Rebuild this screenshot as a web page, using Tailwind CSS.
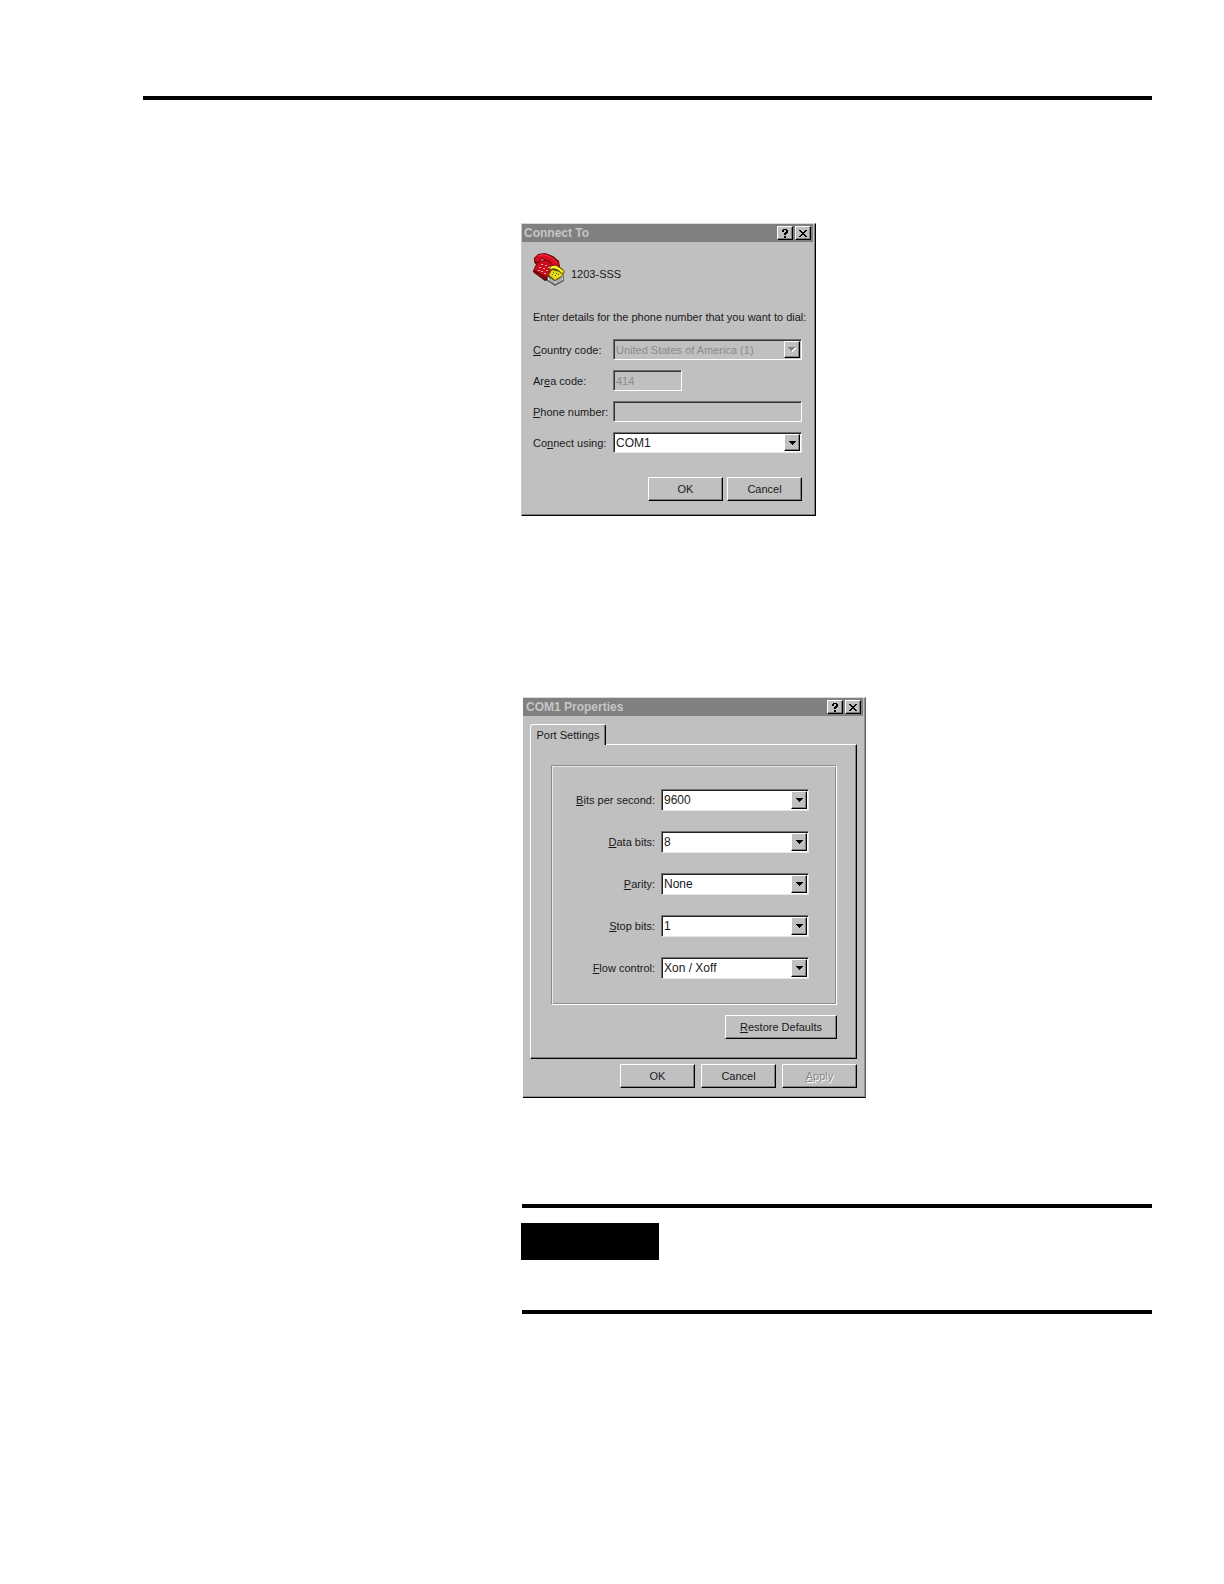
<!DOCTYPE html>
<html lang="en">

<head>
    <meta charset="UTF-8">
    <meta name="viewport" content="width=device-width, initial-scale=1.0">
    <title>1203-SSS Connection Setup</title>
    <script src="https://cdn.jsdelivr.net/npm/@tailwindcss/browser@4"></script>
</head>

<body class="bg-white min-h-screen pt-24 pl-[143px] pr-[72px] pb-24 font-['Liberation_Sans',Arial,sans-serif] text-[11px] leading-[14px] text-[#1a1a1a]">
    <hr class="h-1 border-0 bg-black">

    <!-- Connect To -->
    <section class="ml-[378px] mt-[123px] w-[295px] bg-[#c0c0c0] border-t border-l border-t-[#dadada] border-l-[#c8c8c8] border-r border-b border-r-black border-b-black">
        <div class="pr-px pb-px border-r border-b border-[#808080]">
            <header class="flex items-center justify-between h-[18px] bg-[#808080] pl-[2px] pr-[2px]">
                <h2 class="text-[12px] font-bold text-[#c6c6c6]">Connect To</h2>
                <div class="flex gap-[2px]">
                    <button type="button" aria-label="Help" class="flex items-center justify-center w-4 h-[14px] bg-[#c0c0c0] border border-t-white border-l-white border-r-black border-b-black shadow-[inset_-1px_-1px_0_#808080]">
                        <svg width="8" height="9" viewBox="0 0 8 9" shape-rendering="crispEdges"><path d="M2 0h4v1h1v3h-1v1h-1v1h-2v-2h1v-1h1v-2h-2v2h-2v-2h1zM3 7h2v2h-2z" fill="#000"/></svg>
                    </button>
                    <button type="button" aria-label="Close" class="flex items-center justify-center w-4 h-[14px] bg-[#c0c0c0] border border-t-white border-l-white border-r-black border-b-black shadow-[inset_-1px_-1px_0_#808080]">
                        <svg width="8" height="7" viewBox="0 0 8 7" shape-rendering="crispEdges"><path d="M0 0h2v1h1v1h2v-1h1v-1h2v1h-1v1h-1v1h-1v1h1v1h1v1h1v1h-2v-1h-1v-1h-2v1h-1v1h-2v-1h1v-1h1v-1h1v-1h-1v-1h-1v-1h-1z" fill="#000"/></svg>
                    </button>
                </div>
            </header>

            <form class="pt-[11px] pb-3 px-[11px]" onsubmit="return false">
                <div class="flex items-end gap-[5px]">
                    <svg width="33" height="33" viewBox="0 0 33 33">
                        <path d="M0 18l4-9 14-4 9 8-11 14-4 1-12-9z" fill="#4c0006"/>
                        <path d="M1 17l4-8 12-3 8 7-11 11z" fill="#cc0c1c"/>
                        <path d="M1 18l13 7-2 2-11-7z" fill="#8c0010"/>
                        <path d="M14 24l9-10v5l-9 8z" fill="#740008"/>
                        <path d="M1 5l4-4 7-1 8 3 6 5 1 6-4 2-4-2-1-4-9-4-3 4-4 1-1-3z" fill="#700008"/>
                        <path d="M2 5l4-3 6-1 7 3 6 5 1 3-3 2-3-2-2-3-9-4-4 4-3-1z" fill="#d80c20"/>
                        <path d="M4 3l4-1 5 0 6 3 5 4" fill="none" stroke="#f4343c"/>
                        <path d="M8 11h2v1h-2zM12 12h2v1h-2zM15 14h2v1h-2zM6 14h2v1h-2zM10 15h2v1h-2zM13 17h2v1h-2zM5 17h2v1h-2zM8 18h2v1h-2zM11 20h2v1h-2z" fill="#f4b0a8"/>
                        <path d="M14 23l8 4 9-4v5l-9 5-8-5z" fill="#606060"/>
                        <path d="M15 24l7 4 8-4v3l-8 4-7-4z" fill="#dcdcd8"/>
                        <path d="M17 25v3M19 26v4M21 27v4M24 27v3M26 26v3M28 25v3" stroke="#808080"/>
                        <path d="M15 23l3-7 10 1 3 5-9 6z" fill="#544c00"/>
                        <path d="M16 22l3-5 8 2 3 3-8 5z" fill="#e4d81c"/>
                        <path d="M16 16l2-3 5-1 6 3 3 4-2 2-3-1-2-3-4-1-3 2z" fill="#6c6200"/>
                        <path d="M17 15l2-2h4l5 3 3 3-2 1-2-2-3-2-4-1-2 1z" fill="#fff43c"/>
                        <path d="M20 19h1v1h-1zM23 20h1v1h-1zM19 21h1v1h-1zM22 22h1v1h-1zM25 21h1v1h-1z" fill="#6c6200"/>
                    </svg>
                    <span class="pb-[5px]">1203-SSS</span>
                </div>

                <p class="mt-6 whitespace-nowrap">Enter details for the phone number that you want to dial:</p>

                <div class="mt-[15px] grid grid-cols-[80px_1fr] auto-rows-[21px] gap-y-[10px] items-center">
                    <label for="country"><u>C</u>ountry code:</label>
                    <div class="relative h-full">
                        <select id="country" disabled class="appearance-none block w-full h-full pl-[2px] bg-[#c0c0c0] text-[#8a8a8a] opacity-100 border border-t-[#707070] border-l-[#707070] border-r-white border-b-white shadow-[inset_1px_1px_0_#333]">
                            <option>United States of America (1)</option>
                        </select>
                        <span class="pointer-events-none absolute top-[2px] bottom-[2px] right-[2px] w-4 flex items-center justify-center bg-[#c0c0c0] border border-t-white border-l-white border-r-black border-b-black shadow-[inset_-1px_-1px_0_#808080]">
                            <svg width="8" height="5" viewBox="0 0 8 5" shape-rendering="crispEdges"><path d="M7 1h1v1h-1v1h-1v1h-1v1h-1v-2z" fill="#fff"/><path d="M0 0h7v1h-1v1h-1v1h-1v1h-1v-1h-1v-1h-1v-1h-1z" fill="#808080"/></svg>
                        </span>
                    </div>

                    <label for="area">Ar<u>e</u>a code:</label>
                    <input id="area" type="text" value="414" disabled class="w-[69px] h-full pl-[2px] bg-[#c0c0c0] text-[#8a8a8a] border border-t-[#707070] border-l-[#707070] border-r-white border-b-white shadow-[inset_1px_1px_0_#333]">

                    <label for="phone"><u>P</u>hone number:</label>
                    <input id="phone" type="text" disabled class="w-full h-full pl-[2px] bg-[#c0c0c0] border border-t-[#707070] border-l-[#707070] border-r-white border-b-white shadow-[inset_1px_1px_0_#333]">

                    <label for="port">Co<u>n</u>nect using:</label>
                    <div class="relative h-full">
                        <select id="port" class="appearance-none block w-full h-full pl-[2px] bg-white text-[12px] border border-t-[#707070] border-l-[#707070] border-r-[#e6e6e6] border-b-[#e6e6e6] shadow-[inset_1px_1px_0_#222]">
                            <option>COM1</option>
                        </select>
                        <span class="pointer-events-none absolute top-[2px] bottom-[2px] right-[2px] w-4 flex items-center justify-center bg-[#c0c0c0] border border-t-white border-l-white border-r-black border-b-black shadow-[inset_-1px_-1px_0_#808080]">
                            <svg width="7" height="4" viewBox="0 0 7 4" shape-rendering="crispEdges"><path d="M0 0h7v1h-1v1h-1v1h-1v1h-1v-1h-1v-1h-1v-1h-1z" fill="#000"/></svg>
                        </span>
                    </div>
                </div>

                <div class="mt-6 flex justify-end gap-1">
                    <button type="submit" class="w-[75px] h-6 bg-[#c0c0c0] border border-t-white border-l-white border-r-black border-b-black shadow-[inset_-1px_-1px_0_#808080]">OK</button>
                    <button type="button" class="w-[75px] h-6 bg-[#c0c0c0] border border-t-white border-l-white border-r-black border-b-black shadow-[inset_-1px_-1px_0_#808080]">Cancel</button>
                </div>
            </form>
        </div>
    </section>

    <!-- COM1 Properties -->
    <section class="ml-[380px] mt-[181px] w-[343px] bg-[#c0c0c0] border-t border-t-[#dadada] border-r border-b border-r-[#606060] border-b-black">
        <div class="pr-px border-r border-b border-[#909090]">
            <header class="flex items-center justify-between h-[18px] bg-[#808080] pl-[3px] pr-[2px]">
                <h2 class="text-[12px] font-bold text-[#c6c6c6]">COM1 Properties</h2>
                <div class="flex gap-[2px]">
                    <button type="button" aria-label="Help" class="flex items-center justify-center w-4 h-[14px] bg-[#c0c0c0] border border-t-white border-l-white border-r-black border-b-black shadow-[inset_-1px_-1px_0_#808080]">
                        <svg width="8" height="9" viewBox="0 0 8 9" shape-rendering="crispEdges"><path d="M2 0h4v1h1v3h-1v1h-1v1h-2v-2h1v-1h1v-2h-2v2h-2v-2h1zM3 7h2v2h-2z" fill="#000"/></svg>
                    </button>
                    <button type="button" aria-label="Close" class="flex items-center justify-center w-4 h-[14px] bg-[#c0c0c0] border border-t-white border-l-white border-r-black border-b-black shadow-[inset_-1px_-1px_0_#808080]">
                        <svg width="8" height="7" viewBox="0 0 8 7" shape-rendering="crispEdges"><path d="M0 0h2v1h1v1h2v-1h1v-1h2v1h-1v1h-1v1h-1v1h1v1h1v1h1v1h-2v-1h-1v-1h-2v1h-1v1h-2v-1h1v-1h1v-1h1v-1h-1v-1h-1v-1h-1z" fill="#000"/></svg>
                    </button>
                </div>
            </header>

            <form class="pt-2 pb-2 pl-[7px] pr-[6px]" onsubmit="return false">
                <button type="button" role="tab" class="relative z-10 block w-[76px] h-[21px] -mb-px bg-[#c0c0c0] rounded-t-[3px] border-t border-l border-r border-t-white border-l-white border-r-black shadow-[inset_-1px_0_0_#808080]">Port Settings</button>
                <div class="pt-[20px] pb-[19px] pl-[20px] pr-[19px] border border-t-white border-l-white border-r-black border-b-black shadow-[inset_-1px_-1px_0_#808080]">
                    <div class="border border-[#8c8c8c] border-r-white border-b-white shadow-[inset_1px_1px_0_#e8e8e8,inset_-1px_-1px_0_#8c8c8c] pt-[23px] pb-[25px] pl-[10px] pr-[27px]">
                        <div class="grid grid-cols-[1fr_148px] auto-rows-[22px] gap-x-[6px] gap-y-5 items-center">
                            <label for="bps" class="text-right"><u>B</u>its per second:</label>
                            <div class="relative h-full">
                                <select id="bps" class="appearance-none block w-full h-full pl-[2px] bg-white text-[12px] border border-t-[#707070] border-l-[#707070] border-r-[#e6e6e6] border-b-[#e6e6e6] shadow-[inset_1px_1px_0_#222]">
                                    <option>9600</option>
                                </select>
                                <span class="pointer-events-none absolute top-[2px] bottom-[2px] right-[2px] w-4 flex items-center justify-center bg-[#c0c0c0] border border-t-white border-l-white border-r-black border-b-black shadow-[inset_-1px_-1px_0_#808080]">
                                    <svg width="7" height="4" viewBox="0 0 7 4" shape-rendering="crispEdges"><path d="M0 0h7v1h-1v1h-1v1h-1v1h-1v-1h-1v-1h-1v-1h-1z" fill="#000"/></svg>
                                </span>
                            </div>

                            <label for="databits" class="text-right"><u>D</u>ata bits:</label>
                            <div class="relative h-full">
                                <select id="databits" class="appearance-none block w-full h-full pl-[2px] bg-white text-[12px] border border-t-[#707070] border-l-[#707070] border-r-[#e6e6e6] border-b-[#e6e6e6] shadow-[inset_1px_1px_0_#222]">
                                    <option>8</option>
                                </select>
                                <span class="pointer-events-none absolute top-[2px] bottom-[2px] right-[2px] w-4 flex items-center justify-center bg-[#c0c0c0] border border-t-white border-l-white border-r-black border-b-black shadow-[inset_-1px_-1px_0_#808080]">
                                    <svg width="7" height="4" viewBox="0 0 7 4" shape-rendering="crispEdges"><path d="M0 0h7v1h-1v1h-1v1h-1v1h-1v-1h-1v-1h-1v-1h-1z" fill="#000"/></svg>
                                </span>
                            </div>

                            <label for="parity" class="text-right"><u>P</u>arity:</label>
                            <div class="relative h-full">
                                <select id="parity" class="appearance-none block w-full h-full pl-[2px] bg-white text-[12px] border border-t-[#707070] border-l-[#707070] border-r-[#e6e6e6] border-b-[#e6e6e6] shadow-[inset_1px_1px_0_#222]">
                                    <option>None</option>
                                </select>
                                <span class="pointer-events-none absolute top-[2px] bottom-[2px] right-[2px] w-4 flex items-center justify-center bg-[#c0c0c0] border border-t-white border-l-white border-r-black border-b-black shadow-[inset_-1px_-1px_0_#808080]">
                                    <svg width="7" height="4" viewBox="0 0 7 4" shape-rendering="crispEdges"><path d="M0 0h7v1h-1v1h-1v1h-1v1h-1v-1h-1v-1h-1v-1h-1z" fill="#000"/></svg>
                                </span>
                            </div>

                            <label for="stopbits" class="text-right"><u>S</u>top bits:</label>
                            <div class="relative h-full">
                                <select id="stopbits" class="appearance-none block w-full h-full pl-[2px] bg-white text-[12px] border border-t-[#707070] border-l-[#707070] border-r-[#e6e6e6] border-b-[#e6e6e6] shadow-[inset_1px_1px_0_#222]">
                                    <option>1</option>
                                </select>
                                <span class="pointer-events-none absolute top-[2px] bottom-[2px] right-[2px] w-4 flex items-center justify-center bg-[#c0c0c0] border border-t-white border-l-white border-r-black border-b-black shadow-[inset_-1px_-1px_0_#808080]">
                                    <svg width="7" height="4" viewBox="0 0 7 4" shape-rendering="crispEdges"><path d="M0 0h7v1h-1v1h-1v1h-1v1h-1v-1h-1v-1h-1v-1h-1z" fill="#000"/></svg>
                                </span>
                            </div>

                            <label for="flow" class="text-right"><u>F</u>low control:</label>
                            <div class="relative h-full">
                                <select id="flow" class="appearance-none block w-full h-full pl-[2px] bg-white text-[12px] border border-t-[#707070] border-l-[#707070] border-r-[#e6e6e6] border-b-[#e6e6e6] shadow-[inset_1px_1px_0_#222]">
                                    <option>Xon / Xoff</option>
                                </select>
                                <span class="pointer-events-none absolute top-[2px] bottom-[2px] right-[2px] w-4 flex items-center justify-center bg-[#c0c0c0] border border-t-white border-l-white border-r-black border-b-black shadow-[inset_-1px_-1px_0_#808080]">
                                    <svg width="7" height="4" viewBox="0 0 7 4" shape-rendering="crispEdges"><path d="M0 0h7v1h-1v1h-1v1h-1v1h-1v-1h-1v-1h-1v-1h-1z" fill="#000"/></svg>
                                </span>
                            </div>
                        </div>
                    </div>

                    <div class="mt-[10px] flex justify-end">
                        <button type="button" class="w-28 h-6 bg-[#c0c0c0] border border-t-white border-l-white border-r-black border-b-black shadow-[inset_-1px_-1px_0_#808080]"><u>R</u>estore Defaults</button>
                    </div>
                </div>

                <div class="mt-[5px] flex justify-end gap-[6px]">
                    <button type="submit" class="w-[75px] h-6 bg-[#c0c0c0] border border-t-white border-l-white border-r-black border-b-black shadow-[inset_-1px_-1px_0_#808080]">OK</button>
                    <button type="button" class="w-[75px] h-6 bg-[#c0c0c0] border border-t-white border-l-white border-r-black border-b-black shadow-[inset_-1px_-1px_0_#808080]">Cancel</button>
                    <button type="button" disabled class="w-[75px] h-6 bg-[#c0c0c0] text-[#8a8a8a] text-shadow-[1px_1px_0_#fff] border border-t-white border-l-white border-r-black border-b-black shadow-[inset_-1px_-1px_0_#808080]"><u>A</u>pply</button>
                </div>
            </form>
        </div>
    </section>

    <!-- Note box -->
    <aside class="ml-[379px] mt-[106px] h-[110px] pt-[15px] border-y-4 border-black">
        <div class="-ml-px w-[138px] h-[37px] bg-black"></div>
    </aside>
</body>

</html>
